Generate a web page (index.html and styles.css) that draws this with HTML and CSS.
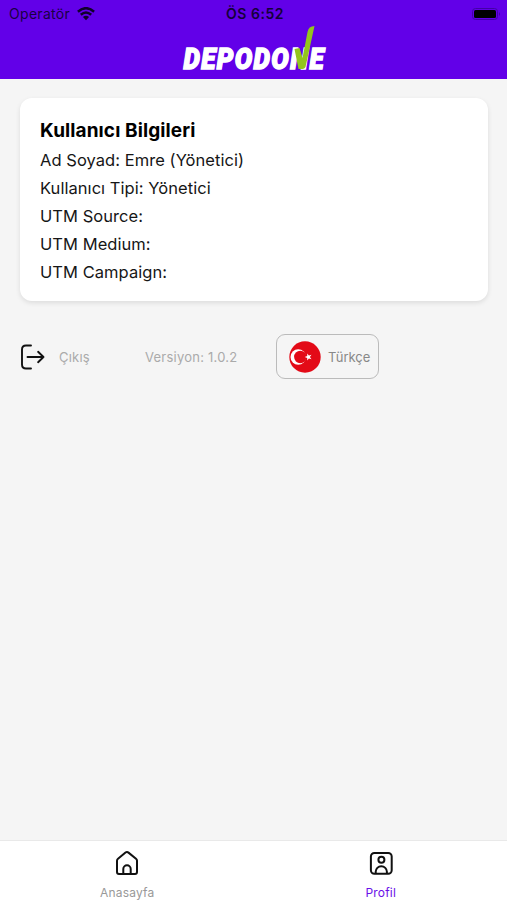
FILE: index.html
```html
<!DOCTYPE html>
<html lang="tr">
<head>
<meta charset="utf-8">
<title>Depodone</title>
<link rel="stylesheet" href="styles.css">
</head>
<body>
<div class="app">
  <header class="header">
    <div class="status">
      <div class="carrier"><span class="carrier-name">Operatör</span>
        <svg width="18" height="14" viewBox="0 0 18 14" fill="none" stroke="#10002b" stroke-width="2.5"><path d="M.9 4.7Q9-2.3 17.1 4.7M3.8 7.8Q9 3.2 14.2 7.8"/><path d="M5.9 10Q9 7.4 12.1 10L9 13.3Z" fill="#10002b" stroke="none"/></svg>
      </div>
      <span class="time">ÖS 6:52</span>
      <svg class="battery" width="29" height="12" viewBox="0 0 29 12"><rect x=".5" y=".5" width="25" height="11" rx="3" fill="none" stroke="#4300a7"/><rect x="2" y="2" width="22" height="8" rx="1.5" fill="#000"/><path d="M27 4q2 2 0 4z" fill="#4300a7"/></svg>
    </div>
    <svg class="logo" width="146" height="46" viewBox="0 0 146 46">
      <text class="logo-text" transform="translate(2.5 43.5) scale(.87 1)" textLength="161" lengthAdjust="spacing">DEPODONE</text>
      <path d="M113.500 24l5-1 3 10 5-26q1-6 7-6l-9 41q-1 2-3 2h-4z" fill="#93c51c"/>
    </svg>
  </header>
  <main class="content">
    <section class="card">
      <h1>Kullanıcı Bilgileri</h1>
      <p>Ad Soyad: Emre (Yönetici)</p>
      <p>Kullanıcı Tipi: Yönetici</p>
      <p>UTM Source:</p>
      <p>UTM Medium:</p>
      <p>UTM Campaign:</p>
    </section>
    <div class="actions">
      <div class="logout">
        <svg width="26" height="26" viewBox="0 0 26 26" fill="none" stroke="#111" stroke-width="1.9" stroke-linecap="round" stroke-linejoin="round"><path d="M11 1.500H6Q2 1.500 2 5.500v15q0 4 4 4h5M7.500 13H23.500M18.100 7.800L23.500 13l-5.400 5.200"/></svg>
        <span>Çıkış</span>
      </div>
      <span class="version">Versiyon: 1.0.2</span>
      <div class="language">
        <svg width="32" height="32" viewBox="0 0 32 32"><circle cx="16" cy="16" r="15.700" fill="#e30a17"/><circle cx="9.200" cy="16" r="7.700" fill="#fff"/><circle cx="11.300" cy="16" r="6.200" fill="#e30a17"/><path d="M15.700 16l2.500-.9v-2.700l1.700 2.200 2.600-.8-1.600 2.200 1.600 2.200-2.600-.8-1.700 2.200v-2.700z" fill="#fff"/></svg>
        <span class="language-name">Türkçe</span>
      </div>
    </div>
  </main>
  <nav class="tabs">
    <div class="tab">
      <svg width="26" height="26" viewBox="0 0 26 26" fill="none" stroke="#111" stroke-width="2" stroke-linejoin="round"><path d="M3 10.800q0-1.200 1-2l7.500-6.200q1.500-1.200 3 0L22 8.800q1 .8 1 2V22q0 2-2 2H5q-2 0-2-2z"/><path d="M9.300 24v-5a3.700 3.700 0 0 1 7.400 0v5"/></svg>
      <span>Anasayfa</span>
    </div>
    <div class="tab active">
      <svg width="26" height="26" viewBox="0 0 26 26" fill="none" stroke="#111" stroke-width="2"><rect x="2.900" y="3" width="20.800" height="20.800" rx="3.500"/><circle cx="13.400" cy="9.700" r="3"/><path d="M7.700 23.500v-1.700a5.600 5.600 0 0 1 11.200 0v1.700"/></svg>
      <span>Profil</span>
    </div>
  </nav>
</div>
</body>
</html>
```
FILE: styles.css
```css
* { box-sizing: border-box; }
body { margin: 0; font-family: Inter, "Liberation Sans", sans-serif; }
svg { display: block; flex: none; }
.app { height: 900px; display: flex; flex-direction: column; background: #f5f5f5; }
.header { height: 79px; flex: none; background: #6200e8; display: flex; flex-direction: column; align-items: center; }
.status { width: 100%; height: 25px; padding: 2px 6px 0 9px; display: grid; grid-template-columns: 1fr auto 1fr; align-items: center; color: #190044; font-size: 14px; line-height: 24px; }
.carrier { display: flex; align-items: center; gap: 7px; }
.carrier-name { letter-spacing: 0.3px; }
.time { font-weight: 600; letter-spacing: 0.5px; color: #14003a; }
.battery { justify-self: end; }
.logo { overflow: visible; }
.logo-text { font: italic 900 30px Roboto, sans-serif; fill: #fff; stroke: #fff; stroke-width: 1.5px; }
.content { flex: 1; padding: 19px 19px 0 20px; }
.card { height: 203px; padding: 19px 20px; background: #fff; border-radius: 12px; box-shadow: 0 2px 5px rgba(0, 0, 0, 0.1); }
.card h1 { margin: 0; font-size: 19px; font-weight: 700; line-height: 28px; letter-spacing: 0.1px; color: #000; }
.card p { margin: 0; font-size: 16.5px; line-height: 28.1px; letter-spacing: 0.05px; color: #161616; }
.card h1 + p { margin-top: 1px; }
.actions { display: flex; align-items: center; margin-top: 33px; height: 45px; font-size: 13px; letter-spacing: 0.23px; color: #aaa; }
.logout { display: flex; align-items: center; gap: 13px; width: 125px; }
.version { width: 131px; }
.language { width: 103px; height: 45px; display: flex; align-items: center; gap: 7px; padding-left: 12px; border: 1px solid #bbb; border-radius: 9px; color: #888; }
.language-name { letter-spacing: 0; }
.tabs { height: 60px; flex: none; display: flex; background: #fff; border-top: 1px solid #e9e9e9; }
.tab { flex: 1; display: flex; flex-direction: column; align-items: center; padding: 9px 0 0 1px; font-size: 12px; line-height: 16px; letter-spacing: 0.2px; color: #999; }
.tab span { margin-top: 9px; }
.tab.active { color: #6a10e8; }
```
